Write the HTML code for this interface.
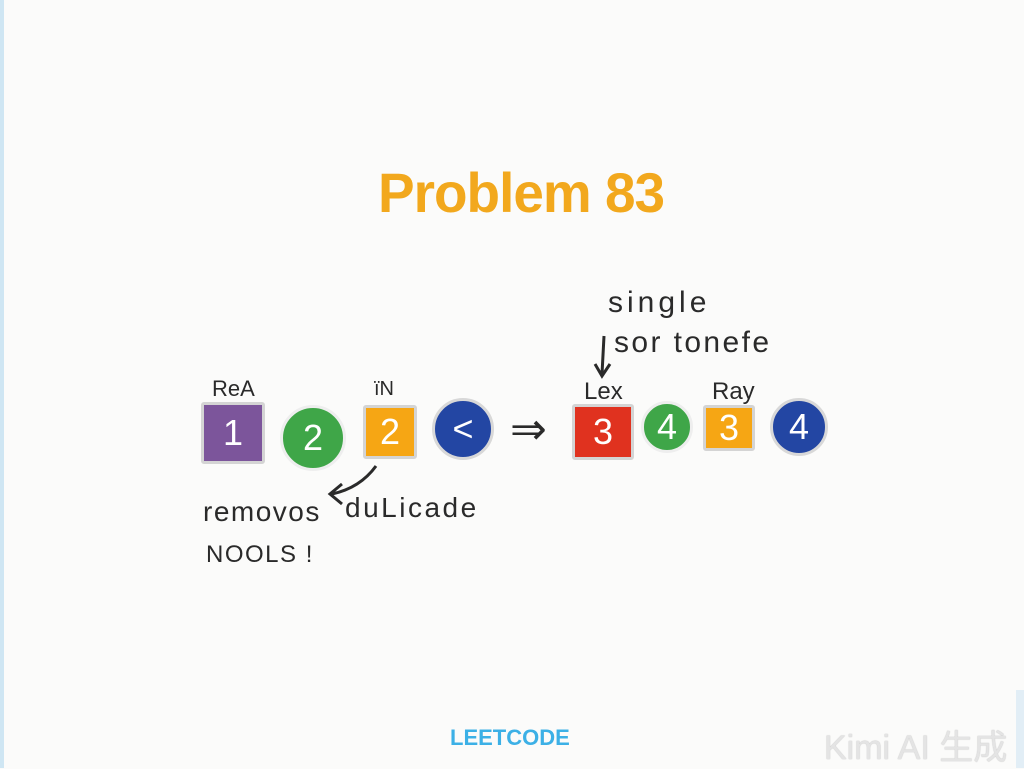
<!DOCTYPE html>
<html><head><meta charset="utf-8"><style>
html,body{margin:0;padding:0}
body{width:1024px;height:768px;background:#fbfbfa;position:relative;overflow:hidden;font-family:"Liberation Sans",sans-serif}
.edge{position:absolute;left:0;top:0;width:4px;height:768px;background:#cfe6f3}
.t{position:absolute;color:#2a2a2a;white-space:nowrap}
.title{position:absolute;left:378px;top:160px;font-size:56px;font-weight:bold;color:#f2a81d;letter-spacing:-1px;transform:scaleX(0.98);transform-origin:left}
.sq{position:absolute;border:3px solid #d4d4d4;border-radius:3px;box-sizing:border-box;color:#fff;font-size:36px;display:flex;align-items:center;justify-content:center}
.ci{position:absolute;border-radius:50%;border:3px solid #d8d8d8;box-sizing:border-box;color:#fff;font-size:36px;display:flex;align-items:center;justify-content:center}
</style></head><body>
<div class="edge"></div>
<div class="edge" style="left:1016px;top:690px;height:78px;width:8px;background:#e2eef6"></div>
<div class="title">Problem 83</div>

<div class="t" style="left:608px;top:286px;font-size:30px;letter-spacing:4px">single</div>
<div class="t" style="left:614px;top:326px;font-size:30px;letter-spacing:2.4px">sor tonefe</div>
<svg style="position:absolute;left:592px;top:334px" width="24" height="50"><path d="M12 2 L10 40 M3 30 L10 42 L18 30" stroke="#2a2a2a" stroke-width="3" fill="none"/></svg>

<div class="t" style="left:212px;top:376px;font-size:22px">ReA</div>
<div class="t" style="left:374px;top:378px;font-size:20px">ïN</div>
<div class="t" style="left:584px;top:378px;font-size:24px">Lex</div>
<div class="t" style="left:712px;top:378px;font-size:24px">Ray</div>

<div class="sq" style="left:201px;top:402px;width:64px;height:62px;background:#7c559b">1</div>
<div class="ci" style="left:280px;top:405px;width:66px;height:66px;background:#3fa648;border-color:#eee">2</div>
<div class="sq" style="left:363px;top:405px;width:54px;height:54px;background:#f6a614">2</div>
<div class="ci" style="left:432px;top:398px;width:62px;height:62px;background:#2346a3">&lt;</div>

<div class="t" style="left:510px;top:404px;font-size:44px">⇒</div>

<div class="sq" style="left:572px;top:404px;width:62px;height:56px;background:#e0321f">3</div>
<div class="ci" style="left:641px;top:401px;width:52px;height:52px;background:#3fa648;border-color:#eee">4</div>
<div class="sq" style="left:703px;top:405px;width:52px;height:46px;background:#f6a614">3</div>
<div class="ci" style="left:770px;top:398px;width:58px;height:58px;background:#2346a3">4</div>

<svg style="position:absolute;left:320px;top:460px" width="70" height="50"><path d="M56 6 Q40 28 12 34 M22 24 L10 34 L22 44" stroke="#2a2a2a" stroke-width="3" fill="none"/></svg>
<div class="t" style="left:203px;top:496px;font-size:28px;letter-spacing:1.5px">removos</div>
<div class="t" style="left:345px;top:492px;font-size:28px;letter-spacing:2.5px">duLicade</div>
<div class="t" style="left:206px;top:541px;font-size:24px;letter-spacing:1.5px">NOOLS !</div>

<div class="t" style="left:450px;top:725px;font-size:22px;font-weight:bold;color:#3cb0e6">LEETCODE</div>
<div class="t" style="left:824px;top:720px;font-size:34px;color:#e4e4e4;text-shadow:0 0 1px #aaa;font-family:'Liberation Sans','Noto Sans CJK SC',sans-serif">Kimi AI 生成</div>
</body></html>
